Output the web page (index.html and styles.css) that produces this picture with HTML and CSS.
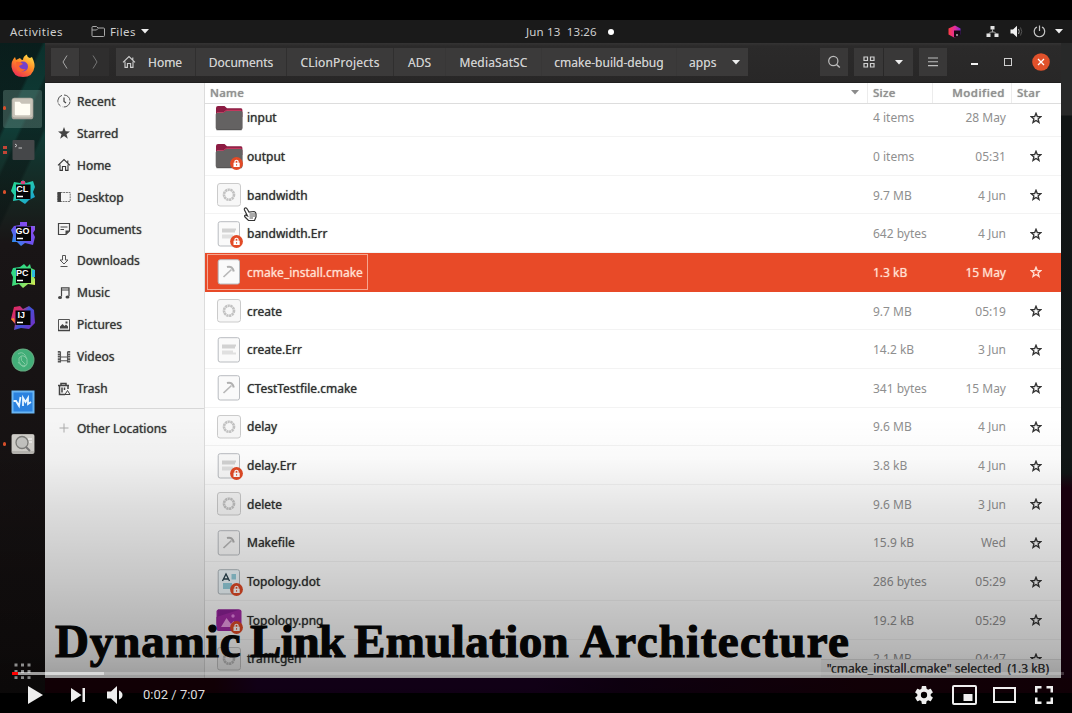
FILE: index.html
```
<!DOCTYPE html>
<html lang="en">
<head>
<meta charset="utf-8">
<title>Dynamic Link Emulation Architecture</title>
<link rel="stylesheet" href="styles.css">
</head>
<body>
<svg class="defs" width="0" height="0">
  <defs>
    <linearGradient id="fox" x1="0.8" y1="0" x2="0.2" y2="1"><stop offset="0" stop-color="#ffe04a"/><stop offset=".45" stop-color="#ff8a25"/><stop offset="1" stop-color="#ef2856"/></linearGradient>
    <linearGradient id="cl" x1="0" y1="0" x2="1" y2="1"><stop offset="0" stop-color="#24d68a"/><stop offset=".5" stop-color="#23c7b4"/><stop offset="1" stop-color="#1896d8"/></linearGradient>
    <linearGradient id="go" x1="0" y1="1" x2="1" y2="0"><stop offset="0" stop-color="#16a6ee"/><stop offset=".45" stop-color="#6b52ee"/><stop offset=".85" stop-color="#8a4df0"/><stop offset="1" stop-color="#3be889"/></linearGradient>
    <linearGradient id="pc" x1="0" y1="0" x2="1" y2="1"><stop offset="0" stop-color="#25d590"/><stop offset=".5" stop-color="#3fdc7a"/><stop offset="1" stop-color="#f4f04a"/></linearGradient>
    <linearGradient id="ij" x1="0" y1="0" x2="1" y2=".6"><stop offset="0" stop-color="#f0244f"/><stop offset=".4" stop-color="#c2337f"/><stop offset=".6" stop-color="#3d55d8"/><stop offset="1" stop-color="#6b35c8"/></linearGradient>
    <linearGradient id="cube" x1="0" y1="0" x2="1" y2="0"><stop offset="0" stop-color="#ff3c43"/><stop offset=".55" stop-color="#e02ba0"/><stop offset="1" stop-color="#7b2cd0"/></linearGradient>
    <symbol id="star" viewBox="0 0 12 12"><path d="M6 1.300 7.300 4.500 10.800 4.700 8.100 6.900 9 10.400 6 8.500 3 10.400 3.900 6.900 1.200 4.700 4.700 4.500Z" fill="none" stroke="currentColor" stroke-width="1.350"/></symbol>
    <symbol id="house" viewBox="0 0 14 14"><path d="M1 7.400 7 1.600 13 7.400M3 6.600V12.400H5.400V8.500H8.600V12.400H11V6.600M10.800 4.800V2.400" fill="none" stroke="currentColor" stroke-width="1.100"/></symbol>
    <symbol id="down" viewBox="0 0 8 5"><path d="M0 0H8L4 4.600Z" fill="currentColor"/></symbol>
    <symbol id="lock" viewBox="0 0 13 13"><circle cx="6.500" cy="6.500" r="6.400" fill="#e24a26"/><path d="M3.500 5.700H9.700V10H3.500Z" fill="#fff"/><path d="M5 6V4.200Q6.500 2.300 8 4.200V6" fill="none" stroke="#fff" stroke-width="1.200"/><path d="M6.600 7V8.800" stroke="#e24a26" stroke-width=".9"/></symbol>
    <symbol id="folder" viewBox="0 0 28 26"><path d="M1 3Q1 1 3 1H9.500L12 3.200H26Q27.400 3.200 27.400 5V12H1Z" fill="#8c1c43"/><path d="M2 7.500H8.500L11.500 5.300H26.500" fill="none" stroke="#d94368" stroke-width=".9"/><path d="M.7 9.500Q.7 7.700 2.500 7.700H8.500L11.300 5.900H26Q27.600 5.900 27.600 7.500V23Q27.600 25 25.500 25H2.800Q.7 25 .7 23Z" fill="#646262"/><path d="M1.500 24.800H26.700" stroke="#4b4949" stroke-width=".7"/></symbol>
    <symbol id="exec" viewBox="0 0 28 26"><rect x="2.500" y="1.500" width="23" height="22.500" rx="2.500" fill="#f7f7f7" stroke="#cbcbcb"/><circle cx="14" cy="12.700" r="5" fill="none" stroke="#c2c2c2" stroke-width="2.600" stroke-dasharray="2.200 .5"/></symbol>
    <symbol id="script" viewBox="0 0 28 26"><rect x="3.200" y=".7" width="21.300" height="24.300" rx="2" fill="#fafafa" stroke="#b9bcc0"/><path d="M8.500 18 16.500 10.500" stroke="#b8b8b8" stroke-width="1.700"/><path d="M12 8Q17.500 6.500 18.800 12.500" fill="none" stroke="#b0b0b0" stroke-width="2.100"/></symbol>
    <symbol id="text" viewBox="0 0 28 26"><rect x="3.200" y=".7" width="21.300" height="24.300" rx="2" fill="#fafafa" stroke="#b9bcc0"/><path d="M7 8.500H21M7 10.500H20" stroke="#d2d2d2" stroke-width="2"/><path d="M7 14.500H18M7 16.500H21" stroke="#e0e0e0" stroke-width="2"/></symbol>
    <symbol id="dot" viewBox="0 0 28 26"><rect x="3.200" y=".7" width="21.300" height="24.300" rx="2" fill="#f2fbff" stroke="#b0b9be"/><path d="M16.500 6.500H21M16.500 9H21M8 15.500H17M8 18.500H16" stroke="#94cfdd" stroke-width="2.800"/><path d="M7.500 12 11 5 14.500 12M9 10H13" fill="none" stroke="#27414d" stroke-width="1.300"/></symbol>
    <symbol id="image" viewBox="0 0 28 26"><rect x="1.500" y="2.500" width="25" height="21.500" rx="2" fill="#a52aa7"/><path d="M1.500 22V10L25 2.500H3Z" fill="#8c2196"/><path d="M6 20 11.500 11 16 17 18.500 14 22 20Z" fill="#ef9ee8"/><circle cx="18" cy="9" r="1.700" fill="#e885e5"/></symbol>
  </defs>
</svg>
<main class="player">
  <section class="video">
    <header class="topbar">
      <span class="activities">Activities</span>
      <svg class="mini-folder" viewBox="0 0 15 13"><path d="M1 10.500V2.500Q1 1.500 2 1.500H5.500L7 3H12.500Q13.500 3 13.500 4V10.500Q13.500 11.500 12.500 11.500H2Q1 11.500 1 10.500ZM1 5H5.500L7 3.500" fill="none" stroke="#a9a9a9"/></svg>
      <span class="files">Files</span>
      <svg class="caret"><use href="#down"/></svg>
      <span class="clock">Jun 13&nbsp; 13:26</span><i class="bullet"></i>
      <div class="tray">
        <svg width="13" height="13" viewBox="0 0 13 13"><path d="M.5 3.500 7 .5 12.500 3.500V9.500L6.500 12.800.5 9.500Z" fill="url(#cube)"/><path d="M6 5.500H12.500V10L7 12.500H6Z" fill="#150912"/><path d="M8 10H10" stroke="#fff"/></svg>
        <svg class="net" width="13" height="13" viewBox="0 0 13 13"><path d="M4.500 1H8.500V4.500H4.500ZM.5 8.500H4.500V12H.5ZM8.500 8.500H12.500V12H8.500Z" fill="#e3e3e3"/><path d="M6.500 4V7M2.500 9 4.500 7H8.500L10.500 9" stroke="#aaa" fill="none"/></svg>
        <svg class="snd" width="13" height="13" viewBox="0 0 13 13"><path d="M.5 4.500H3L7 .8V12.200L3 8.500H.5Z" fill="#f0f0f0"/><path d="M8.500 4Q10 6.500 8.500 9" stroke="#aaa" fill="none"/><path d="M10.500 2.500Q13 6.500 10.500 10.500" stroke="#555" fill="none"/></svg>
        <svg class="pwr" width="13" height="13" viewBox="0 0 13 13"><path d="M4 2Q1.200 3.300 1.200 6.500A5.200 5.200 0 0 0 11.700 6.500Q11.700 3.300 9 2M6.500 .5V6" stroke="#c4c4c4" fill="none" stroke-width="1.200"/></svg>
        <svg class="caret"><use href="#down"/></svg>
      </div>
    </header>
    <div class="desktop">
      <nav class="dock">
        <div class="app"><svg viewBox="0 0 24 24"><path d="M12 23Q2 23 .5 13 0 7 4 3L5 6 9 4Q10 6 12 6 12 2 16 .5 16 3 19 4L21 3Q24 9 23.500 13 22 23 12 23Z" fill="url(#fox)"/><circle cx="12" cy="12.500" r="5" fill="#7440cc"/><path d="M5 8Q9 7 12 10L8 12Q10 16 15 15 10 20 6 16Z" fill="#f9652f"/></svg></div>
        <div class="app active one"><svg viewBox="0 0 24 24"><rect x=".7" y=".7" width="22.600" height="22.600" rx="3" fill="#a9a49b"/><rect x="1.500" y="1.500" width="21" height="20" rx="2.500" fill="#c8c3b8"/><path d="M4 5H9L11 7H20V18Q20 19 19 19H5Q4 19 4 18Z" fill="#fffdf3"/></svg></div>
        <div class="app two"><svg viewBox="0 0 24 24"><rect x="1.500" y="2" width="22" height="20" rx="1" fill="#454749"/><path d="M4 6 6 7.500 4 9M7.500 10H11" stroke="#c7c7c7" fill="none"/></svg></div>
        <div class="app one"><svg viewBox="0 0 24 24"><path d="M3 2 9 3 12 0 15 3 22 1 24 7 22 12 24 17 18 20 14 24 8 20 2 21 3 15 0 11Z" fill="url(#cl)"/><path d="M10 1H14V4H10Z" fill="#dc4580"/><rect x="5" y="4.500" width="14.500" height="14.500" fill="#050505"/><text x="5.200" y="11.800">CL</text><path d="M6 16.500H12" stroke="#fff" stroke-width="1.500"/></svg></div>
        <div class="app"><svg viewBox="0 0 24 24"><path d="M3 4 9 3 9 0 16 0 16 4 24 4 24 8 22 11 24 15 22 23 14 21 10 24 6 20 1 20 2 13 0 8Z" fill="url(#go)"/><rect x="5" y="4.500" width="15" height="14.500" fill="#050505"/><text x="4.500" y="11.800">GO</text><path d="M6 16.500H12" stroke="#fff" stroke-width="1.500"/></svg></div>
        <div class="app"><svg viewBox="0 0 24 24"><path d="M2 4 9 3 13 0 16 3 19 0 20 4 24 6 22 11 24 15 24 21 17 20 12 24 8 20 1 22 2 13 0 9Z" fill="url(#pc)"/><path d="M21 6H24V13H21Z" fill="#2cbce0"/><rect x="5" y="4.500" width="15" height="14.500" fill="#050505"/><text x="4.900" y="11.800">PC</text><path d="M6 16.500H12" stroke="#fff" stroke-width="1.500"/></svg></div>
        <div class="app"><svg viewBox="0 0 24 24"><path d="M3 1 9 0 12 3 18 0 23 4 24 17 18 23 10 22 3 24 4 18 0 13Z" fill="url(#ij)"/><path d="M0 13 3 12 4 17Z" fill="#ff8b29"/><rect x="4.500" y="4.500" width="15" height="14.500" fill="#050505"/><text x="6.500" y="11.800">IJ</text><path d="M6 16.500H12" stroke="#fff" stroke-width="1.500"/></svg></div>
        <div class="app"><svg viewBox="0 0 24 24"><circle cx="12" cy="12" r="11.500" fill="#62a77e"/><circle cx="12" cy="12" r="10.500" fill="#42ae78"/><path d="M7 6Q11 3 14 7T16 16Q13 21 10 17T8 10Q12 5 16 11M7 14Q10 19 15 17M10 8Q9 13 14 16" stroke="#83cba3" fill="none"/></svg></div>
        <div class="app"><svg viewBox="0 0 24 24"><rect x=".5" y=".5" width="23" height="23" fill="#69b5f3"/><rect x="2.500" y="2.500" width="19" height="19" fill="#2b82df"/><path d="M2.500 11H5L8 16 9.500 7M12 16V8L14.500 12 17 8V14L20 12" stroke="#e9f6ff" stroke-width="1.800" fill="none"/></svg></div>
        <div class="app one"><svg viewBox="0 0 24 24"><rect x=".5" y="2" width="23" height="20" rx="2" fill="#b7b5b0"/><rect x="1" y="3" width="22" height="16" fill="#d0cec9"/><circle cx="11" cy="10.500" r="6" fill="#c2c2bf" stroke="#7b7b78" stroke-width="1.300"/><path d="M15 15 19 19" stroke="#777" stroke-width="2"/><path d="M17 7H21M18 10H21" stroke="#fff"/></svg></div>
        <svg class="launcher" viewBox="0 0 17 17"><path d="M2 .5V16M8.500 .5V16M15 .5V16" stroke="#d2d2d2" stroke-width="3" stroke-dasharray="3 3.400"/></svg>
      </nav>
      <section class="window">
        <header class="titlebar">
          <div class="button back"><svg width="8" height="16" viewBox="0 0 8 16"><path d="M6 1.500 2 8 6 14.500" fill="none" stroke="#a8a8a8"/></svg></div>
          <div class="button forward"><svg width="8" height="16" viewBox="0 0 8 16"><path d="M2 1.500 6 8 2 14.500" fill="none" stroke="#757575"/></svg></div>
          <div class="path">
            <div class="crumb c1"><svg width="14" height="14"><use href="#house"/></svg><span>Home</span></div>
            <div class="crumb c2">Documents</div>
            <div class="crumb c3">CLionProjects</div>
            <div class="crumb c4">ADS</div>
            <div class="crumb c5">MediaSatSC</div>
            <div class="crumb c6">cmake-build-debug</div>
            <div class="crumb c7">apps<svg class="caret"><use href="#down"/></svg></div>
          </div>
          <div class="tools">
            <div class="button search"><svg width="14" height="14" viewBox="0 0 14 14"><circle cx="6.300" cy="6" r="4.600" fill="none" stroke="#bdbdbd" stroke-width="1.200"/><path d="M9.500 9.500 12.800 12.500" stroke="#bdbdbd" stroke-width="1.500"/></svg></div>
            <div class="button grid"><svg width="12" height="12" viewBox="0 0 12 12"><path d="M1 1H4.500V4.500H1ZM7.500 1H11V4.500H7.500ZM1 7.500H4.500V11H1ZM7.500 7.500H11V11H7.500Z" fill="none" stroke="#d0d0d0" stroke-width="1.200"/></svg></div>
            <div class="button more"><svg class="caret"><use href="#down"/></svg></div>
            <div class="button menu"><svg width="10" height="10" viewBox="0 0 10 10"><path d="M0 1H10M0 4.800H10M0 8.600H10" stroke="#bdbdbd" stroke-width="1.100"/></svg></div>
            <i class="minimize"></i><i class="maximize"></i>
            <svg class="close" viewBox="0 0 18 18"><circle cx="9" cy="9" r="8.800" fill="#e0512b"/><path d="M6 6 12 12M12 6 6 12" stroke="#fff" stroke-width="1.300"/></svg>
          </div>
        </header>
        <div class="content">
          <aside class="sidebar">
            <div class="place"><svg viewBox="0 0 14 14"><path d="M7 1A6 6 0 1 1 5.500 12.800M5 1.300A6 6 0 0 0 3.500 12" fill="none" stroke="#555" stroke-dasharray="9 1"/><path d="M7 3.500V7.500L9 9" fill="none" stroke="#444" stroke-width="1.200"/></svg><span>Recent</span></div>
            <div class="place"><svg viewBox="0 0 14 14"><path d="M7 1 8.600 5.300 13 5.500 9.500 8.300 10.800 12.700 7 10.100 3.200 12.700 4.500 8.300 1 5.500 5.400 5.300Z" fill="#444"/></svg><span>Starred</span></div>
            <div class="place"><svg><use href="#house"/></svg><span>Home</span></div>
            <div class="place"><svg viewBox="0 0 14 14"><path d="M.8 2.500H13.200V11.500H.8Z" fill="none" stroke="#777" stroke-dasharray="2 .7"/><path d="M.5 2H4V12H.5Z" fill="#444"/></svg><span>Desktop</span></div>
            <div class="place"><svg viewBox="0 0 14 14"><path d="M1.500 1.500H12.500V9L9 12.500H1.500ZM3.500 5H10.500M3.500 7.500H7" fill="none" stroke="#444" stroke-width="1.200"/><path d="M8.500 12.800V8.500H12.800Z" fill="#444"/></svg><span>Documents</span></div>
            <div class="place"><svg viewBox="0 0 14 14"><path d="M5.500 1.500H8.500V6H11L7 10 3 6H5.500ZM3.500 12.500H10.500" fill="none" stroke="#555"/></svg><span>Downloads</span></div>
            <div class="place"><svg viewBox="0 0 14 14"><path d="M4.500 10.500V1.800H12V10M4.500 4H12" fill="none" stroke="#444" stroke-width="1.200"/><ellipse cx="3" cy="11.500" rx="2" ry="1.500" fill="#444"/><ellipse cx="10.500" cy="11" rx="2" ry="1.500" fill="#444"/></svg><span>Music</span></div>
            <div class="place"><svg viewBox="0 0 14 14"><path d="M1.500 1.500H12.500V12.500H1.500Z" fill="none" stroke="#555"/><path d="M3 10.500V8.500L5.500 6 7.500 8 9 6.500 11 8.500V10.500ZM8.500 3.500H10.500V5.500H8.500Z" fill="#444"/><path d="M1 12.500H13" stroke="#444" stroke-width="1.500"/></svg><span>Pictures</span></div>
            <div class="place"><svg viewBox="0 0 14 14"><path d="M2 1V13M12 1V13" stroke="#555" stroke-width="2.400" stroke-dasharray="1.800 .6"/><path d="M3.500 1.500V12.500M10.500 1.500V12.500M3.500 7H10.500M3.500 10.800H10.500" stroke="#555" stroke-width="1.100"/></svg><span>Videos</span></div>
            <div class="place"><svg viewBox="0 0 14 14"><path d="M1 3.500H12M4 3V1.500H9V3M2.500 4V12.500H8M11 4V7M5 5.500V10.500M7.500 5.500V8" fill="none" stroke="#444" stroke-width="1.500"/><path d="M8 12.500 10.500 8.500 13 12.500Z" fill="none" stroke="#444"/></svg><span>Trash</span></div>
            <div class="place other"><svg viewBox="0 0 14 14"><path d="M7 2.500V11.500M2.500 7H11.500" stroke="#aaa"/></svg><span>Other Locations</span></div>
          </aside>
          <section class="list">
            <div class="columns"><div class="h-name"><span>Name</span><svg class="caret"><use href="#down"/></svg></div><div class="h-size"><span>Size</span></div><div class="h-mod"><span>Modified</span></div><div class="h-star"><span>Star</span></div></div>
            <div class="rows">
              <div class="row"><div class="name"><span class="icon"><svg><use href="#folder"/></svg></span><span>input</span></div><div class="size">4 items</div><div class="mod">28 May</div><svg class="star"><use href="#star"/></svg></div>
              <div class="row"><div class="name"><span class="icon"><svg><use href="#folder"/></svg><svg class="badge"><use href="#lock"/></svg></span><span>output</span></div><div class="size">0 items</div><div class="mod">05:31</div><svg class="star"><use href="#star"/></svg></div>
              <div class="row"><div class="name"><span class="icon"><svg><use href="#exec"/></svg></span><span>bandwidth</span></div><div class="size">9.7 MB</div><div class="mod">4 Jun</div><svg class="star"><use href="#star"/></svg></div>
              <div class="row"><div class="name"><span class="icon"><svg><use href="#text"/></svg><svg class="badge"><use href="#lock"/></svg></span><span>bandwidth.Err</span></div><div class="size">642 bytes</div><div class="mod">4 Jun</div><svg class="star"><use href="#star"/></svg></div>
              <div class="row selected"><div class="name"><span class="icon"><svg><use href="#script"/></svg></span><span>cmake_install.cmake</span></div><div class="size">1.3 kB</div><div class="mod">15 May</div><svg class="star"><use href="#star"/></svg></div>
              <div class="row"><div class="name"><span class="icon"><svg><use href="#exec"/></svg></span><span>create</span></div><div class="size">9.7 MB</div><div class="mod">05:19</div><svg class="star"><use href="#star"/></svg></div>
              <div class="row"><div class="name"><span class="icon"><svg><use href="#text"/></svg></span><span>create.Err</span></div><div class="size">14.2 kB</div><div class="mod">3 Jun</div><svg class="star"><use href="#star"/></svg></div>
              <div class="row"><div class="name"><span class="icon"><svg><use href="#script"/></svg></span><span>CTestTestfile.cmake</span></div><div class="size">341 bytes</div><div class="mod">15 May</div><svg class="star"><use href="#star"/></svg></div>
              <div class="row"><div class="name"><span class="icon"><svg><use href="#exec"/></svg></span><span>delay</span></div><div class="size">9.6 MB</div><div class="mod">4 Jun</div><svg class="star"><use href="#star"/></svg></div>
              <div class="row"><div class="name"><span class="icon"><svg><use href="#text"/></svg><svg class="badge"><use href="#lock"/></svg></span><span>delay.Err</span></div><div class="size">3.8 kB</div><div class="mod">4 Jun</div><svg class="star"><use href="#star"/></svg></div>
              <div class="row"><div class="name"><span class="icon"><svg><use href="#exec"/></svg></span><span>delete</span></div><div class="size">9.6 MB</div><div class="mod">3 Jun</div><svg class="star"><use href="#star"/></svg></div>
              <div class="row"><div class="name"><span class="icon"><svg><use href="#script"/></svg></span><span>Makefile</span></div><div class="size">15.9 kB</div><div class="mod">Wed</div><svg class="star"><use href="#star"/></svg></div>
              <div class="row"><div class="name"><span class="icon"><svg><use href="#dot"/></svg><svg class="badge"><use href="#lock"/></svg></span><span>Topology.dot</span></div><div class="size">286 bytes</div><div class="mod">05:29</div><svg class="star"><use href="#star"/></svg></div>
              <div class="row"><div class="name"><span class="icon"><svg><use href="#image"/></svg><svg class="badge"><use href="#lock"/></svg></span><span>Topology.png</span></div><div class="size">19.2 kB</div><div class="mod">05:29</div><svg class="star"><use href="#star"/></svg></div>
              <div class="row"><div class="name"><span class="icon"><svg><use href="#exec"/></svg></span><span>trafficgen</span></div><div class="size">2.1 MB</div><div class="mod">04:47</div><svg class="star"><use href="#star"/></svg></div>
            </div>
            <div class="status"><span>"cmake_install.cmake" selected&nbsp; (1.3 kB)</span></div>
          </section>
        </div>
      </section>
    </div>
    <svg class="pointer" viewBox="0 0 15 15"><path d="M2 1Q3.500 .5 4.500 2.500L6 5 11 4.500Q13 5 13 7V10L11.500 13.500H5.500L2 10Q1 8.500 2.500 8L4.500 9 1.500 3Q1 1.500 2 1Z" fill="#fff" stroke="#333" stroke-width="1.200"/><path d="M6.500 7H12M6.500 9H12M6.500 11H10" stroke="#444" stroke-width=".9"/></svg>
    <div class="shade"></div>
    <h1 class="caption"><span class="w1">Dynamic</span> <span class="w2">Link</span> <span class="w3">Emulation</span> <span class="w4">Architecture</span></h1>
    <div class="progress"><i class="loaded"></i><i class="played"></i></div>
  </section>
  <footer class="controls">
    <svg class="play" viewBox="0 0 15 18"><path d="M0 0 15 9 0 18Z"/></svg>
    <svg class="next" viewBox="0 0 14 14"><path d="M0 0 10.500 7 0 14ZM11.500 0H14V14H11.500Z"/></svg>
    <svg class="volume" viewBox="0 0 16 18"><path d="M0 5.500H4L10 0V18L4 12.500H0ZM12 4.500Q15.500 6 15.500 9T12 13.500Z"/></svg>
    <span class="time">0:02 / 7:07</span>
    <div class="right">
      <svg class="gear" viewBox="2 2 20 20"><path d="M19.430 12.980c.04-.32.07-.64.07-.98s-.03-.66-.07-.98l2.110-1.650a.5.5 0 0 0 .12-.64l-2-3.460a.5.5 0 0 0-.61-.22l-2.490 1a7.300 7.300 0 0 0-1.690-.98l-.38-2.650A.49.49 0 0 0 14 2h-4a.49.49 0 0 0-.49.42l-.38 2.650c-.61.25-1.170.59-1.690.98l-2.490-1a.49.49 0 0 0-.61.22l-2 3.460a.49.49 0 0 0 .12.64l2.110 1.650a7.900 7.900 0 0 0 0 1.960l-2.110 1.650a.5.5 0 0 0-.12.64l2 3.460c.12.220.39.300.61.220l2.490-1c.52.400 1.080.730 1.690.980l.38 2.650c.03.240.24.420.49.420h4c.25 0 .46-.18.49-.42l.38-2.650c.61-.25 1.170-.59 1.690-.98l2.490 1c.23.090.49 0 .61-.22l2-3.460a.5.5 0 0 0-.12-.64ZM12 15.500a3.500 3.500 0 1 1 0-7 3.500 3.500 0 0 1 0 7Z"/></svg>
      <svg class="pip" viewBox="0 0 25 20"><path d="M2 0H23Q25 0 25 2V18Q25 20 23 20H2Q0 20 0 18V2Q0 0 2 0ZM2 2V18H23V2ZM11.500 9H20.500V16H11.500Z" fill-rule="evenodd"/></svg>
      <svg class="theater" viewBox="0 0 23 16"><path d="M0 0H23V16H0ZM2 2V14H21V2Z" fill-rule="evenodd"/></svg>
      <svg class="full" viewBox="0 0 18 18"><path d="M0 0H6.500V2.500H2.500V6.500H0ZM11.500 0H18V6.500H15.500V2.500H11.500ZM0 11.500H2.500V15.500H6.500V18H0ZM15.500 11.500H18V18H11.500V15.500H15.500Z"/></svg>
    </div>
  </footer>
</main>
</body>
</html>
```
FILE: styles.css
```
* { box-sizing: border-box; }
body { margin: 0; background: #000; font-family: "Noto Sans", sans-serif; }
svg { display: block; flex: none; }
.defs { position: absolute; }
.player { width: 1072px; height: 713px; overflow: hidden; background: #000; position: relative; display: flex; flex-direction: column; }
.video { height: 673px; margin-top: 20px; position: relative; background: #090807; }

.topbar { height: 23px; background: #1a1a1a; color: #cfcfcf; display: flex; align-items: center; font-size: 11.5px; white-space: nowrap; }
.activities { margin-left: 10px; width: 81px; letter-spacing: .5px; }
.mini-folder { width: 15px; height: 13px; margin-right: 4px; }
.files { width: 28px; letter-spacing: .4px; }
.caret { width: 8px; height: 5px; color: #eee; }
.topbar > .caret { margin-left: 3px; }
.clock { margin-left: 377px; width: 73px; letter-spacing: .15px; }
.bullet { width: 6px; height: 6px; border-radius: 3px; background: #fff; margin-left: 9px; }
.tray { display: flex; align-items: center; margin-left: auto; margin-right: 9px; }
.net { margin-left: 25px; }
.snd { margin-left: 11px; }
.pwr { margin-left: 10px; }
.tray .caret { margin-left: 9px; }

.desktop { height: 650px; display: flex; background: linear-gradient(180deg, #282929 0, #282929 72px, #111515 73px, #101616 430px, #1b000f 445px, #1b000f 635px, transparent 635px), linear-gradient(90deg, #1b0008 0, #1b0008 20%, #1b0023 24%, #1b0023 50%, #150018 58%, #1b000a 80%); }
.dock { width: 45px; height: 650px; padding-top: 2px; background: linear-gradient(115deg, rgba(8,17,17,.6) 0 12%, transparent 13% 17%, rgba(8,17,17,.45) 18% 24%, transparent 25%), linear-gradient(180deg, #0b302c 0, #103d37 85px, #162722 150px, #191516 200px, #120e0e 100%); }
.app { height: 42px; display: flex; align-items: center; justify-content: center; position: relative; }
.app svg { width: 24px; height: 24px; }
.app text { font: bold 9px "Liberation Sans", sans-serif; fill: #fff; }
.active::before { content: ""; position: absolute; inset: 3px 3px 1px 3px; background: rgba(140,175,165,.3); border-radius: 2px; }
.active svg { position: relative; width: 23px; height: 23px; }
.one::after { content: ""; position: absolute; left: 3px; top: 19px; width: 3px; height: 4px; border-radius: 2px; background: #d9502b; }
.two::after { content: ""; position: absolute; left: 3px; top: 17px; width: 4px; height: 8px; background: linear-gradient(#c24536 0 3px, transparent 3px 5px, #c24536 5px); }
.launcher { width: 17px; height: 17px; margin: 198px 0 0 14px; }

.window { width: 1016px; height: 635px; }
.titlebar { height: 40px; display: flex; align-items: center; background: linear-gradient(#353434 0, #2b2a2a 3px, #282727 100%); color: #d0d0d0; font-size: 12px; padding: 0 0 1px 6px; border-bottom: 1px solid #1f1f1f; }
.button { width: 28px; height: 28px; background: #393838; display: flex; align-items: center; justify-content: center; }
.back { background: #3b3a3a; }
.forward { margin-left: 1px; background: #2f2e2e; width: 29px; }
.path { display: flex; height: 28px; margin-left: 7px; background: #3b3a3a; text-shadow: 0 0 .5px #aaa; }
.crumb { display: flex; align-items: center; justify-content: center; border-left: 1px solid #302f2f; white-space: nowrap; }
.c1 { width: 79px; border: 0; justify-content: flex-start; padding-left: 6px; gap: 12px; }
.c2 { width: 91px; } .c3 { width: 107px; letter-spacing: .2px; } .c4 { width: 52px; } .c5 { width: 96px; letter-spacing: .15px; } .c6 { width: 135px; }
.c7 { width: 72px; justify-content: flex-start; padding-left: 12px; gap: 15px; letter-spacing: .1px; }
.c5, .c6, .c7 { border-color: #383737; }
.tools { display: flex; align-items: center; margin-left: 72px; }
.grid { margin-left: 6px; width: 29px; }
.more { margin-left: 1px; width: 29px; }
.menu { margin-left: 6px; }
.minimize { width: 7px; height: 2px; background: #f2f2f2; margin: 4px 0 0 24px; }
.maximize { width: 8px; height: 8px; border: 1px solid #d0d0d0; border-width: 1px 1.5px; margin-left: 26px; }
.close { width: 18px; height: 18px; margin-left: 20px; }

.content { display: flex; height: 595px; }
.sidebar { width: 160px; background: #f5f5f5; border-right: 1px solid #dcdcdc; padding-top: 3px; color: #363636; font-size: 12px; }
.place { height: 31.920px; display: flex; align-items: center; padding: 0 0 1px 12px; gap: 6px; white-space: nowrap; text-shadow: 0 0 1px #555; }
.place svg { width: 14px; height: 14px; }
.other { border-top: 1px solid #d7d7d7; margin-top: 3px; height: 40px; }
.list { width: 856px; height: 595px; background: #fff; position: relative; overflow: hidden; display: flex; flex-direction: column; }
.columns { height: 21px; flex: none; display: grid; grid-template-columns: 662px 65px 79px 50px; border-bottom: 1px solid #ddd; color: #929292; font-size: 11.5px; font-weight: 500; letter-spacing: .3px; text-shadow: 0 0 1px #929292; background: #fff; z-index: 1; }
.columns div { display: flex; align-items: center; padding: 0 0 1px 5px; border-left: 1px solid #ececec; line-height: 18px; }
.columns .h-name { justify-content: space-between; padding-right: 8px; border: 0; }
.columns .caret { color: #8b8b8b; }
.columns .h-mod { justify-content: flex-end; padding-right: 6px; letter-spacing: .5px; }
.rows { margin-top: -5.600px; flex: none; height: 580.500px; overflow: hidden; }
.row { height: 38.670px; display: grid; grid-template-columns: 662px 65px 79px 50px; align-items: center; border-bottom: 1px solid #f3f3f3; font-size: 12px; color: #2f2f2f; }
.name { height: 100%; display: flex; align-items: center; padding: 1px 0 0 10px; gap: 4px; text-shadow: 0 0 1px #555; white-space: nowrap; }
.icon { width: 28px; height: 26px; position: relative; }
.icon svg { width: 28px; height: 26px; }
.icon .badge { position: absolute; right: 0; bottom: -1px; width: 13px; height: 13px; }
.size { padding: 1px 0 0 6px; color: #8f8f8f; white-space: nowrap; }
.mod { padding: 1px 5px 0 0; text-align: right; color: #8f8f8f; }
.row .star { width: 12px; height: 12px; margin: 1px 0 0 18.500px; color: #333; }
.selected { background: #e84a28; border-color: #e84a28; }
.selected .name, .selected .size, .selected .mod, .selected .star { color: #ffe0d3; text-shadow: 0 0 1px #ffc1ad; }
.selected .name { width: 161px; height: 36px; margin-left: 2px; padding-left: 8px; box-shadow: inset 0 0 0 1px #f6a58f; }
.status { position: absolute; right: 0; bottom: 0; width: 240px; height: 19px; background: #f5f5f5; border-top: 1px solid #e2e2e2; font-size: 12px; line-height: 18px; color: #3a3a3a; text-align: right; padding-right: 12px; white-space: nowrap; text-shadow: 0 0 .5px #3a3a3a; }

.pointer { position: absolute; left: 243px; top: 187px; width: 15px; height: 15px; }
.shade { position: absolute; left: 0; right: 0; bottom: 0; height: 275px; background: linear-gradient(rgba(0,0,0,0) 0, rgba(0,0,0,.025) 15%, rgba(0,0,0,.1) 33%, rgba(0,0,0,.19) 58%, rgba(0,0,0,.29) 85%, rgba(0,0,0,.4) 100%); }
.caption { position: absolute; left: 55px; top: 594px; margin: 0; display: flex; font: bold 47px/54px "Liberation Serif", serif; color: #050505; white-space: nowrap; -webkit-text-stroke: 1.200px #050505; }
.w1 { width: 195px; letter-spacing: .9px; }
.w2 { width: 104px; letter-spacing: -.5px; }
.w3 { width: 226px; letter-spacing: .4px; }
.w4 { letter-spacing: 1.350px; }
.progress { position: absolute; left: 12px; top: 652px; width: 1052px; height: 3px; background: rgba(255,255,255,.2); }
.progress i { position: absolute; left: 0; top: 0; height: 3px; }
.loaded { width: 92px; background: rgba(255,255,255,.5); }
.played { width: 6px; background: #f00; }
.controls { height: 20px; position: absolute; left: 0; right: 0; top: 685px; display: flex; align-items: center; }
.controls svg { fill: #eee; }
.play { width: 15px; height: 18px; margin-left: 28px; }
.next { width: 14px; height: 14px; margin-left: 28px; }
.volume { width: 16px; height: 18px; margin-left: 22px; }
.time { font: 13px Roboto, sans-serif; color: #ddd; margin: -2px 0 0 20px; }
.right { margin-left: auto; margin-right: 19px; display: flex; align-items: center; }
.gear { width: 18px; height: 18px; }
.pip { width: 25px; height: 20px; margin-left: 19px; }
.theater { width: 23px; height: 16px; margin-left: 16px; }
.full { width: 18px; height: 18px; margin-left: 19px; }
```
